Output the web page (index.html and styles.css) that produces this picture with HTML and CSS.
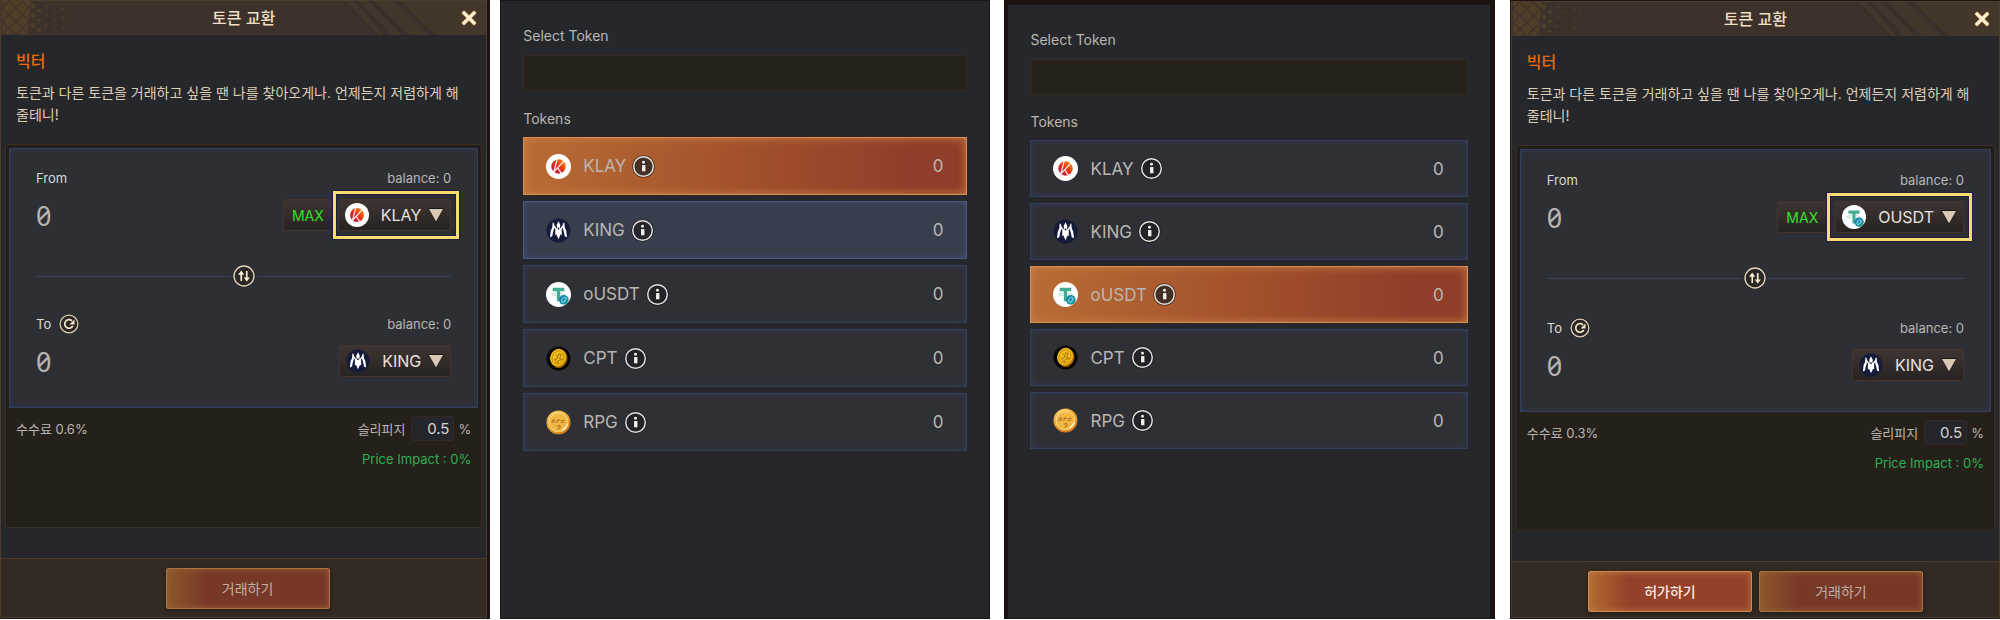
FILE: index.html
```
<!DOCTYPE html>
<html lang="ko">
<head>
  <meta charset="UTF-8">
  <title>토큰 교환</title>
  <link rel="stylesheet" href="styles.css">
</head>
<body>
  <!-- shared icons -->
  <svg class="sprite" aria-hidden="true">
    <defs>
      <linearGradient id="klayFill" x1="0" y1="1" x2="1" y2="0">
        <stop offset="0" stop-color="#b00d4c"/>
        <stop offset="0.5" stop-color="#e8301c"/>
        <stop offset="1" stop-color="#ff9a00"/>
      </linearGradient>
      <radialGradient id="rpgFill" cx="0.4" cy="0.3" r="0.8">
        <stop offset="0" stop-color="#ffe08a"/>
        <stop offset="0.6" stop-color="#eda52e"/>
        <stop offset="1" stop-color="#b9661a"/>
      </radialGradient>
      <pattern id="mesh" width="14" height="14" patternUnits="userSpaceOnUse">
        <path d="M7 1l6 6-6 6-6-6z M0 -6l6 6-6 6-6-6z M14 -6l6 6-6 6-6-6z M0 8l6 6-6 6-6-6z M14 8l6 6-6 6-6-6z" fill="#4f3f28"/>
      </pattern>
    </defs>
    <symbol id="klay" viewBox="0 0 26 26">
      <circle cx="13" cy="13" r="13" fill="#fff"/>
      <circle cx="13" cy="13" r="7.500" fill="url(#klayFill)"/>
      <path d="M12 4L8 19M7 20L19 7M12 14l5 8" stroke="#fff" stroke-width="1.200" fill="none"/>
    </symbol>
    <symbol id="king" viewBox="0 0 26 26">
      <circle cx="13" cy="13" r="12.500" fill="#161b3a"/>
      <path d="M13 3.500l2 4-.6 2.500 2 2.500V18l-1.200-1-2.200 5-2.200-5-1.200 1v-5.500l2-2.500L11 7.500z" fill="#fff"/>
      <path d="M7 4.500l1.500 1.500v5L7.500 14 6.500 19l-2.300 1 .8-7 1.500-3zM19 4.500l-1.500 1.500v5l1 3 1 5 2.300 1-.8-7-1.500-3z" fill="#fff"/>
      <path d="M8 8l3 4M18 8l-3 4" stroke="#fff" stroke-width="1.500"/>
      <circle cx="13" cy="11" r="1" fill="#161b3a"/>
    </symbol>
    <symbol id="ousdt" viewBox="0 0 26 26">
      <circle cx="13" cy="13" r="13" fill="#fff"/>
      <path d="M7 6h12v3.500h-4.300V20h-3.400V9.500H7z" fill="#45ab92"/>
      <path d="M11 11.500c-7 .5-7 2.300 0 2.500M15 11.500c6 .5 6 2.300 0 2.500" stroke="#8fcfbf" stroke-width="0.700" fill="none"/>
      <circle cx="18.500" cy="18.500" r="5" fill="#1487ad"/>
      <path d="M22 15a5 5 0 0 1-7 7z" fill="#159b95"/>
      <ellipse cx="18.500" cy="18.500" rx="1.700" ry="2.800" transform="rotate(40 18.500 18.500)" fill="none" stroke="#8fd6ea" stroke-width="1"/>
    </symbol>
    <symbol id="cpt" viewBox="0 0 26 26">
      <circle cx="13" cy="13" r="12.500" fill="#080706"/>
      <ellipse cx="14" cy="13.500" rx="8" ry="9.500" transform="rotate(25 14 13.500)" fill="#a86c05"/>
      <ellipse cx="12.500" cy="12" rx="8" ry="9.200" transform="rotate(25 12.500 12)" fill="#f3be18"/>
      <ellipse cx="12.500" cy="12" rx="6" ry="7.200" transform="rotate(25 12.500 12)" fill="none" stroke="#b98108" stroke-width="0.800"/>
      <path d="M9 14l3-1 1-5 3 1-2 4 3 1-4 1-1 3-2-2zM10 9l2 2" stroke="#94670a" stroke-width="0.900" fill="none"/>
    </symbol>
    <symbol id="rpg" viewBox="0 0 26 26">
      <circle cx="13" cy="13" r="12.500" fill="url(#rpgFill)"/>
      <circle cx="13" cy="13" r="9.800" fill="#f0b843" stroke="#ffe6a0" stroke-width="0.800"/>
      <path d="M6 13.500l1-3h2l-1 3M11 13.500l1-3h2.500M16 13.500c-.5-3 1-3 3.500-2.500M17 13h2" stroke="#b3742a" stroke-width="1.100" fill="none"/>
      <path d="M11 17l3-1 1 2-3 2" stroke="#b3742a" stroke-width="1.100" fill="none"/>
      <path d="M17 21a9.500 9.500 0 0 0 5-6" stroke="#fff4cc" stroke-width="1.200" fill="none"/>
    </symbol>
    <symbol id="info" viewBox="0 0 24 24">
      <circle cx="12" cy="12" r="11.800" fill="#16161a" opacity="0.600"/>
      <circle cx="12" cy="12" r="10.200" fill="#2b2c30" fill-opacity="0.300" stroke="#e4e2de" stroke-width="1.500"/>
      <circle cx="12" cy="7.500" r="1.500" fill="#f2f0ec"/>
      <path d="M10.500 10.500h3.500v6.500h-3.500z" fill="#f2f0ec"/>
    </symbol>
    <symbol id="swap" viewBox="0 0 24 24">
      <circle cx="12" cy="12" r="12" fill="#1c1b1b"/>
      <circle cx="12" cy="12" r="10.900" fill="#2a2725" stroke="#e2d6bd" stroke-width="1.500"/>
      <path d="M9 17.500V8M15 6.500v10" stroke="#fbeed2" stroke-width="1.800"/>
      <path d="M5.500 10.500L9 6l3.200 4.500zM11.800 13.500L15 18l3.500-4.500z" fill="#fbeed2"/>
    </symbol>
    <symbol id="refresh" viewBox="0 0 20 20">
      <circle cx="10" cy="10" r="10" fill="#1c1b1b"/>
      <circle cx="10" cy="10" r="8.900" fill="#2a2725" stroke="#dccfb6" stroke-width="1.300"/>
      <path d="M13.800 12A4.300 4.300 0 1 1 13 6.800" stroke="#f2e5ca" stroke-width="1.700" fill="none"/>
      <path d="M15.500 5.500v5h-5z" fill="#f2e5ca"/>
    </symbol>
    <symbol id="close" viewBox="0 0 16 16">
      <path d="M3 3l10 10M13 3L3 13" stroke="#8a5a20" stroke-width="4.600" stroke-linecap="round"/>
      <path d="M3 3l10 10M13 3L3 13" stroke="#fff1d3" stroke-width="3.200" stroke-linecap="square"/>
    </symbol>
    <symbol id="caret" viewBox="0 0 16 16">
      <path d="M0 1h16L8 16z" fill="#1a1614"/>
      <path d="M1 2h14L8 14.500z" fill="#d9c8b6"/>
    </symbol>
    <symbol id="headLeft" viewBox="0 0 72 34">
      <path d="M0 0h30L26 34H0z" fill="url(#mesh)"/>
      <g fill="#4f3f28">
        <circle cx="32" cy="5" r="2.500"/><circle cx="32" cy="15" r="2.500"/><circle cx="32" cy="25" r="2.500"/>
        <circle cx="38" cy="10" r="2"/><circle cx="38" cy="20" r="2"/><circle cx="38" cy="30" r="2"/>
        <circle cx="46" cy="5" r="1.300"/><circle cx="46" cy="15" r="1.300"/><circle cx="45" cy="25" r="1.300"/>
        <circle cx="54" cy="10" r="1.200"/><circle cx="54" cy="20" r="1.200"/><circle cx="54" cy="29" r="1.200"/>
        <circle cx="63" cy="8" r="1.200"/><circle cx="63" cy="17" r="1.200"/><circle cx="63" cy="27" r="1.200"/>
        <circle cx="69" cy="12" r="1"/><circle cx="69" cy="22" r="1"/>
      </g>
    </symbol>
    <symbol id="headRight" viewBox="0 0 146 34">
      <path d="M6 0h140v34H38z" fill="#43362b"/>
      <path d="M1 0h5l32 34h-7zM14 0h5l32 34h-7zM28 0h6l36 34h-8zM54 0h6l36 34h-8z" fill="#3a2f2a"/>
    </symbol>
  </svg>

  <main class="screens">

    <section class="screen swap-first">
      <div class="window">
        <header class="window-header">
          <svg class="deco-left"><use href="#headLeft"/></svg>
          <svg class="deco-right"><use href="#headRight"/></svg>
          <h1>토큰 교환</h1>
          <button class="close-btn" aria-label="닫기"><svg><use href="#close"/></svg></button>
        </header>
        <div class="npc">
          <h2>빅터</h2>
          <p>토큰과 다른 토큰을 거래하고 싶을 땐 나를 찾아오게나. 언제든지 저렴하게 해줄테니!</p>
        </div>
        <div class="swap-box">
          <div class="pair">
            <div class="pair-head">
              <label for="from1">From</label>
              <span class="balance">balance: 0</span>
            </div>
            <div class="pair-row">
              <input class="amount" id="from1" type="text" value="0">
              <button class="max-btn">MAX</button>
              <div class="highlight">
                <button class="token-btn"><svg><use href="#klay"/></svg><span>KLAY</span><svg class="caret"><use href="#caret"/></svg></button>
              </div>
            </div>
            <div class="divider">
              <button class="icon-btn" aria-label="전환"><svg class="swap-icon"><use href="#swap"/></svg></button>
            </div>
            <div class="pair-head">
              <label for="to1">To</label>
              <button class="icon-btn" aria-label="새로고침"><svg class="refresh-icon"><use href="#refresh"/></svg></button>
              <span class="balance">balance: 0</span>
            </div>
            <div class="pair-row">
              <input class="amount" id="to1" type="text" value="0">
              <button class="token-btn"><svg><use href="#king"/></svg><span>KING</span><svg class="caret"><use href="#caret"/></svg></button>
            </div>
          </div>
          <div class="fees">
            <span class="fee">수수료 0.6%</span>
            <label for="slip1">슬리피지</label>
            <input class="slippage" id="slip1" type="text" value="0.5">
            <span>%</span>
          </div>
          <p class="impact">Price Impact : 0%</p>
        </div>
        <footer class="window-footer">
          <button class="action-btn" disabled>거래하기</button>
        </footer>
      </div>
    </section>

    <section class="screen list-first">
      <div class="picker">
        <label class="picker-label" for="search1">Select Token</label>
        <input class="search" id="search1" type="text">
        <h2 class="picker-label">Tokens</h2>
        <ul class="tokens">
          <li class="selected"><button class="pick"><svg><use href="#klay"/></svg>KLAY</button><button class="icon-btn" aria-label="KLAY info"><svg class="info-icon"><use href="#info"/></svg></button><span class="qty">0</span></li>
          <li class="hovered"><button class="pick"><svg><use href="#king"/></svg>KING</button><button class="icon-btn" aria-label="KING info"><svg class="info-icon"><use href="#info"/></svg></button><span class="qty">0</span></li>
          <li><button class="pick"><svg><use href="#ousdt"/></svg>oUSDT</button><button class="icon-btn" aria-label="oUSDT info"><svg class="info-icon"><use href="#info"/></svg></button><span class="qty">0</span></li>
          <li><button class="pick"><svg><use href="#cpt"/></svg>CPT</button><button class="icon-btn" aria-label="CPT info"><svg class="info-icon"><use href="#info"/></svg></button><span class="qty">0</span></li>
          <li><button class="pick"><svg><use href="#rpg"/></svg>RPG</button><button class="icon-btn" aria-label="RPG info"><svg class="info-icon"><use href="#info"/></svg></button><span class="qty">0</span></li>
        </ul>
      </div>
    </section>

    <section class="screen list-second">
      <div class="picker">
        <label class="picker-label" for="search2">Select Token</label>
        <input class="search" id="search2" type="text">
        <h2 class="picker-label">Tokens</h2>
        <ul class="tokens">
          <li><button class="pick"><svg><use href="#klay"/></svg>KLAY</button><button class="icon-btn" aria-label="KLAY info"><svg class="info-icon"><use href="#info"/></svg></button><span class="qty">0</span></li>
          <li><button class="pick"><svg><use href="#king"/></svg>KING</button><button class="icon-btn" aria-label="KING info"><svg class="info-icon"><use href="#info"/></svg></button><span class="qty">0</span></li>
          <li class="selected"><button class="pick"><svg><use href="#ousdt"/></svg>oUSDT</button><button class="icon-btn" aria-label="oUSDT info"><svg class="info-icon"><use href="#info"/></svg></button><span class="qty">0</span></li>
          <li><button class="pick"><svg><use href="#cpt"/></svg>CPT</button><button class="icon-btn" aria-label="CPT info"><svg class="info-icon"><use href="#info"/></svg></button><span class="qty">0</span></li>
          <li><button class="pick"><svg><use href="#rpg"/></svg>RPG</button><button class="icon-btn" aria-label="RPG info"><svg class="info-icon"><use href="#info"/></svg></button><span class="qty">0</span></li>
        </ul>
      </div>
    </section>

    <section class="screen swap-second">
      <div class="window">
        <header class="window-header">
          <svg class="deco-left"><use href="#headLeft"/></svg>
          <svg class="deco-right"><use href="#headRight"/></svg>
          <h1>토큰 교환</h1>
          <button class="close-btn" aria-label="닫기"><svg><use href="#close"/></svg></button>
        </header>
        <div class="npc">
          <h2>빅터</h2>
          <p>토큰과 다른 토큰을 거래하고 싶을 땐 나를 찾아오게나. 언제든지 저렴하게 해줄테니!</p>
        </div>
        <div class="swap-box">
          <div class="pair">
            <div class="pair-head">
              <label for="from2">From</label>
              <span class="balance">balance: 0</span>
            </div>
            <div class="pair-row">
              <input class="amount" id="from2" type="text" value="0">
              <button class="max-btn">MAX</button>
              <div class="highlight">
                <button class="token-btn"><svg><use href="#ousdt"/></svg><span>OUSDT</span><svg class="caret"><use href="#caret"/></svg></button>
              </div>
            </div>
            <div class="divider">
              <button class="icon-btn" aria-label="전환"><svg class="swap-icon"><use href="#swap"/></svg></button>
            </div>
            <div class="pair-head">
              <label for="to2">To</label>
              <button class="icon-btn" aria-label="새로고침"><svg class="refresh-icon"><use href="#refresh"/></svg></button>
              <span class="balance">balance: 0</span>
            </div>
            <div class="pair-row">
              <input class="amount" id="to2" type="text" value="0">
              <button class="token-btn"><svg><use href="#king"/></svg><span>KING</span><svg class="caret"><use href="#caret"/></svg></button>
            </div>
          </div>
          <div class="fees">
            <span class="fee">수수료 0.3%</span>
            <label for="slip2">슬리피지</label>
            <input class="slippage" id="slip2" type="text" value="0.5">
            <span>%</span>
          </div>
          <p class="impact">Price Impact : 0%</p>
        </div>
        <footer class="window-footer">
          <button class="action-btn">허가하기</button>
          <button class="action-btn" disabled>거래하기</button>
        </footer>
      </div>
    </section>

  </main>
</body>
</html>
```

FILE: styles.css
```
* {
  margin: 0;
  padding: 0;
  box-sizing: border-box;
}

body {
  font-family: Inter, 'Noto Sans CJK KR', sans-serif;
  font-size: 13px;
  color: #b9b6b2;
  background: #fff;
}

button,
input {
  font-family: inherit;
  border: none;
  background: none;
  color: inherit;
}

button {
  cursor: pointer;
}

button:disabled {
  cursor: default;
}

svg {
  display: block;
}

.sprite {
  position: absolute;
  width: 0;
  height: 0;
}

.screens {
  display: flex;
  min-height: 100vh;
  padding-bottom: 1px;
}

.screen {
  flex: 1 1 25%;
  display: flex;
  flex-direction: column;
  min-width: 0;
  background: #1c1210;
}

.swap-first {
  padding: 0 3px 1px 0;
}

.list-first {
  margin-left: 10px;
}

.list-second {
  margin-left: 14px;
  padding: 4px 4px 0 3px;
}

.swap-second {
  margin-left: 15px;
  padding: 1px 0 1px 1px;
}

/* swap window */

.window {
  flex: 1;
  display: flex;
  flex-direction: column;
  background: #26272b;
  border: 1px solid #4c3e2a;
}

.window-header {
  position: relative;
  display: flex;
  align-items: center;
  justify-content: center;
  height: 34px;
  background: #3d312b;
  border-bottom: 1px solid #44362a;
}

.window-header h1 {
  position: relative;
  font-size: 16px;
  font-weight: 500;
  line-height: 24px;
  color: #efdfc2;
}

.deco-left {
  position: absolute;
  left: 0;
  top: 0;
  width: 72px;
  height: 33px;
}

.deco-right {
  position: absolute;
  right: 0;
  top: 0;
  width: 146px;
  height: 34px;
}

.close-btn {
  position: absolute;
  right: 9px;
  top: 9px;
}

.close-btn svg {
  width: 16px;
  height: 16px;
}

.npc {
  padding: 14px 20px 0 15px;
  height: 109px;
}

.npc h2 {
  font-size: 16px;
  font-weight: 500;
  line-height: 24px;
  color: #ea6a0c;
}

.npc p {
  margin-top: 9px;
  font-size: 14px;
  line-height: 22px;
  color: #ddceb6;
}

.swap-box {
  flex: 1;
  margin: 0 4px 30px;
  padding: 3px;
  background: #25211a;
  border: 1px solid #3a2e22;
  border-radius: 3px;
  box-shadow: inset 0 0 6px #1e1a16;
}

.pair {
  padding: 19px 26px 30px;
  background: #2e2f34;
  border: 1px solid #33405c;
  box-shadow: inset 0 0 6px #2f3a55;
}

.pair-head {
  display: flex;
  align-items: center;
  height: 20px;
}

.pair-head label {
  color: #dcd9d6;
}

.pair-head .icon-btn {
  margin-left: 8px;
}

.balance {
  margin-left: auto;
}

.pair-row {
  display: flex;
  align-items: center;
  height: 32px;
  margin-top: 11px;
}

.amount {
  flex: 1;
  min-width: 0;
  height: 32px;
  font-family: 'Noto Sans', sans-serif;
  font-size: 27px;
  font-feature-settings: 'zero';
  color: #b5b4b3;
}

.token-btn,
.max-btn {
  height: 32px;
  background: linear-gradient(#3e3533, #272322);
  border: 1px solid #453629;
  border-radius: 3px;
}

.token-btn {
  display: flex;
  align-items: center;
  padding: 0 6px;
  font-size: 16px;
  color: #e6e3e0;
}

.token-btn svg {
  width: 24px;
  height: 24px;
}

.token-btn span {
  margin: 0 7px 0 12px;
}

.token-btn .caret {
  width: 16px;
  height: 16px;
}

.max-btn {
  padding: 0 8px;
  font-size: 14px;
  color: #30e421;
}

/* yellow frame round the selector */
.highlight {
  margin: -8px -8px -8px 0;
  padding: 5px 5px 5px 2px;
  border: 3px solid #f8dc70;
  box-shadow: 0 0 1px 1px #1d2338, inset 0 0 1px 1px #1d2338;
}

.divider {
  display: flex;
  align-items: center;
  gap: 2px;
  height: 22px;
  margin: 34px 0 27px;
}

.divider::before,
.divider::after {
  content: '';
  flex: 1;
  height: 1px;
  background: #36415c;
}

.swap-icon {
  width: 22px;
  height: 22px;
}

.refresh-icon {
  width: 20px;
  height: 20px;
}

.fees {
  display: flex;
  align-items: center;
  height: 25px;
  margin: 8px 7px 0;
  font-size: 13px;
}

.fee {
  margin-right: auto;
}

.slippage {
  width: 43px;
  height: 25px;
  margin: 0 4px 0 6px;
  padding-right: 4px;
  font-size: 15px;
  text-align: right;
  color: #d5d2d0;
  background: #24262c;
  border: 1px solid #352b22;
  border-radius: 3px;
}

.impact {
  margin: 8px 7px 0;
  line-height: 20px;
  text-align: right;
  color: #2bb052;
}

.window-footer {
  display: flex;
  align-items: center;
  justify-content: center;
  gap: 7px;
  height: 59px;
  background: #332b23;
  border-top: 1px solid #4a3a26;
}

.action-btn {
  width: 164px;
  height: 41px;
  font-size: 14px;
  font-weight: 500;
  color: #f6e9e2;
  background: linear-gradient(90deg, #b26b30, #94412a 24%);
  border: 1px solid #d08a4c;
  border-radius: 2px;
  box-shadow: inset 0 0 6px #c07a45, 0 1px 4px #1d1814;
}

.action-btn:disabled {
  font-weight: 400;
  color: #c0afa4;
  background: linear-gradient(90deg, #8c5829, #783828 24%);
  border-color: #a97440;
  box-shadow: inset 0 0 6px #98603a, 0 1px 4px #1d1814;
}

.swap-first .window-footer {
  padding-left: 8px;
}

.swap-second .pair {
  padding-top: 20px;
}

.swap-second .divider {
  margin: 34px 0 29px;
}

.swap-second .highlight {
  padding-left: 5px;
}

.swap-second .window-footer {
  height: 56px;
  padding-top: 3px;
}

/* token list */

.picker {
  flex: 1;
  padding: 25px 22px 0;
  background: #26272b;
  border: 1px solid #16171a;
}

.picker-label {
  display: block;
  font-size: 14px;
  font-weight: 400;
  line-height: 20px;
}

.search {
  display: block;
  width: 100%;
  height: 36px;
  margin: 9px 0 18px;
  padding: 0 12px;
  background: #25211b;
  border: 1px solid #352b24;
  border-radius: 3px;
}

.tokens {
  list-style: none;
  display: flex;
  flex-direction: column;
  gap: 6px;
  margin-top: 8px;
}

.tokens li {
  display: flex;
  align-items: center;
  height: 58px;
  padding: 0 23px 0 22px;
  font-size: 17px;
  background: #2f3035;
  border: 1px solid #33405c;
  box-shadow: inset 0 0 6px #2f3a55;
}

.tokens .hovered {
  background: #393e4d;
  border-color: #465685;
  box-shadow: inset 0 0 6px #43507a;
}

.tokens .selected {
  background: linear-gradient(90deg, #b86c33, #a4532d 45%, #903d29 88%);
  border-color: #d98d4f;
  box-shadow: inset 0 0 9px #cd8148;
}

.pick {
  display: flex;
  align-items: center;
  gap: 12px;
  font-size: 17px;
}

.pick svg {
  width: 25px;
  height: 25px;
}

.info-icon {
  width: 23px;
  height: 23px;
  margin-left: 6px;
}

.qty {
  margin-left: auto;
}

.list-second .search {
  margin-bottom: 17px;
}

.list-second .tokens li {
  height: 57px;
}
```
